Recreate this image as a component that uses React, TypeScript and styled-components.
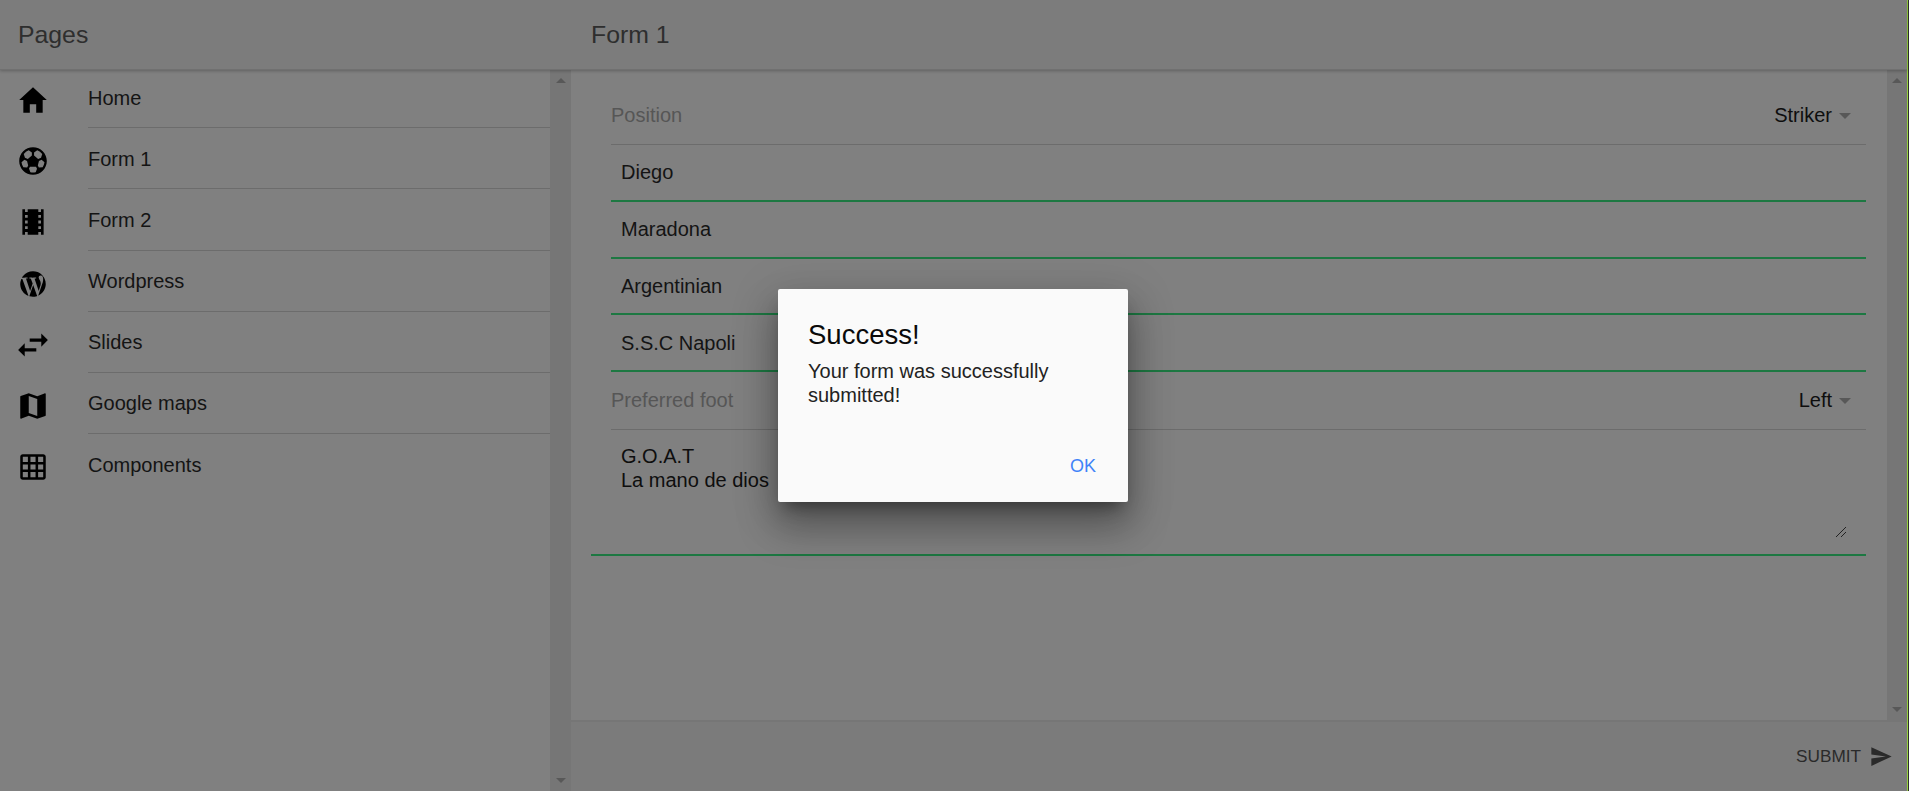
import React from 'react';
import styled, { createGlobalStyle } from 'styled-components';
import { IoMdHome, IoMdFootball, IoMdFilm, IoLogoWordpress, IoMdSwap, IoMdMap, IoMdGrid, IoMdSend } from 'react-icons/io';

const Global = createGlobalStyle`
  html, body { margin: 0; height: 100%; overflow: hidden; }
  #root { height: 100%; }
  * { box-sizing: border-box; }
  body { font-family: "Liberation Sans", Arial, sans-serif; background: #808080; }
`;

const Page = styled.div`
  position: relative;
  height: 791px;
  width: 1909px;
  background: #808080;
  border-right: 1px solid #2e2e2e;
`;
const Column = styled.div`
  height: 100%;
  display: flex;
  flex-direction: column;
  border-right: 1px solid #96d03f;
`;
const Header = styled.header`
  height: 70px;
  flex: none;
  display: flex;
  align-items: center;
  background: #7c7c7c;
  border-bottom: 1px solid #707070;
  box-shadow: 0 1px 3px rgba(0,0,0,0.25);
  position: relative;
  z-index: 1;
  color: #2e2e2e;
  font-size: 24.8px;
`;
const HeaderLeft = styled.div`
  width: 571px;
  padding-left: 18px;
`;
const HeaderRight = styled.div`
  padding-left: 20px;
`;
const Body = styled.div`
  flex: 1;
  display: flex;
  min-height: 0;
`;
const Sidebar = styled.aside`
  width: 571px;
  flex: none;
  display: flex;
`;
const NavList = styled.nav`
  flex: 1;
  margin-top: -3px;
`;
const NavRow = styled.div`
  height: 61.2px;
  display: flex;
`;
const NavIcon = styled.div`
  width: 88px;
  flex: none;
  padding-left: 16px;
  padding-top: 16px;
  font-size: 34px;
  line-height: 0;
  color: #000;
`;
const NavText = styled.div`
  flex: 1;
  font-size: 20px;
  color: #141414;
  padding-top: 19.5px;
  border-bottom: 1px solid #6c6c6c;
`;
const NavTextLast = styled(NavText)`
  border-bottom: none;
`;
const Scrollbar = styled.div`
  width: 21px;
  flex: none;
  display: flex;
  flex-direction: column;
  justify-content: space-between;
  align-items: center;
  padding: 8px 0;
  background: #767676;
`;
const MainScrollbar = styled(Scrollbar)`
  width: 20px;
`;
const ArrowUp = styled.div`
  width: 0;
  height: 0;
  border-left: 5px solid transparent;
  border-right: 5px solid transparent;
  border-bottom: 5px solid #585858;
`;
const ArrowDown = styled.div`
  width: 0;
  height: 0;
  border-left: 5px solid transparent;
  border-right: 5px solid transparent;
  border-top: 5px solid #585858;
`;
const Main = styled.main`
  flex: 1;
  display: flex;
  flex-direction: column;
  min-width: 0;
`;
const Content = styled.div`
  flex: 1;
  display: flex;
  min-height: 0;
`;
const Form = styled.div`
  flex: 1;
  padding: 0 21px 0 40px;
`;
const PickerRow = styled.div`
  height: 58px;
  display: flex;
  align-items: center;
  justify-content: space-between;
  padding: 0 15px 0 0;
  border-bottom: 1px solid #6c6c6c;
  font-size: 20px;
  color: #0e0e0e;
`;
const FirstPicker = styled(PickerRow)`
  margin-top: 15px;
  height: 60px;
  padding-top: 2px;
`;
const PickerLabel = styled.span`
  color: #565656;
`;
const PickerValue = styled.span`
  display: flex;
  align-items: center;
  gap: 7px;
`;
const Caret = styled.span`
  width: 0;
  height: 0;
  border-left: 6.5px solid transparent;
  border-right: 6.5px solid transparent;
  border-top: 6.5px solid #585858;
`;
const Field = styled.div`
  height: 56.75px;
  padding: 1px 10px 0;
  display: flex;
  align-items: center;
  font-size: 20px;
  color: #141414;
  border-bottom: 2px solid #1d7842;
`;
const Area = styled.div`
  position: relative;
  margin: 0 0 0 -20px;
  height: 126px;
  padding: 14px 0 0 30px;
  font-size: 20px;
  line-height: 24px;
  color: #0e0e0e;
  border-bottom: 2px solid #1d7842;
`;
const Grip = styled.svg`
  position: absolute;
  right: 19px;
  bottom: 16px;
`;
const Footer = styled.div`
  height: 71px;
  flex: none;
  display: flex;
  align-items: center;
  justify-content: flex-end;
  gap: 8px;
  padding-right: 13px;
  background: #7b7b7b;
  border-top: 2px solid #767676;
  font-size: 17.2px;
  color: #2a2a2a;
`;
const Overlay = styled.div`
  position: absolute;
  inset: 0;
  z-index: 5;
  display: flex;
  align-items: flex-start;
  justify-content: center;
  padding-top: 289px;
`;
const Dialog = styled.div`
  width: 350px;
  height: 213px;
  margin-right: 2px;
  background: #fafafa;
  border-radius: 2px;
  padding: 31px 30px 0;
  display: flex;
  flex-direction: column;
  box-shadow: 0 11px 15px -7px rgba(0,0,0,.4), 0 24px 38px 3px rgba(0,0,0,.28), 0 9px 46px 8px rgba(0,0,0,.1);
`;
const Title = styled.div`
  font-size: 27.5px;
  line-height: 30px;
  color: #0a0a0a;
`;
const Message = styled.div`
  margin-top: 9px;
  font-size: 20px;
  line-height: 24px;
  color: #222;
`;
const Actions = styled.div`
  margin-top: auto;
  padding-bottom: 25px;
  display: flex;
  justify-content: flex-end;
`;
const OkButton = styled.span`
  font-size: 18px;
  color: #3f83f8;
  margin-right: 2px;
`;

const items: [React.ComponentType, string][] = [
  [IoMdHome, 'Home'], [IoMdFootball, 'Form 1'], [IoMdFilm, 'Form 2'],
  [IoLogoWordpress, 'Wordpress'], [IoMdSwap, 'Slides'], [IoMdMap, 'Google maps'],
];

export default function App() {
  return (
    <Page>
      <Global />
      <Column>
        <Header>
          <HeaderLeft>Pages</HeaderLeft>
          <HeaderRight>Form 1</HeaderRight>
        </Header>
        <Body>
          <Sidebar>
            <NavList>
              {items.map(([I, t]) => (
                <NavRow key={t}><NavIcon><I /></NavIcon><NavText>{t}</NavText></NavRow>
              ))}
              <NavRow><NavIcon><IoMdGrid /></NavIcon><NavTextLast>Components</NavTextLast></NavRow>
            </NavList>
            <Scrollbar><ArrowUp /><ArrowDown /></Scrollbar>
          </Sidebar>
          <Main>
            <Content>
              <Form>
                <FirstPicker>
                  <PickerLabel>Position</PickerLabel>
                  <PickerValue>Striker<Caret /></PickerValue>
                </FirstPicker>
                <Field>Diego</Field>
                <Field>Maradona</Field>
                <Field>Argentinian</Field>
                <Field>S.S.C Napoli</Field>
                <PickerRow>
                  <PickerLabel>Preferred foot</PickerLabel>
                  <PickerValue>Left<Caret /></PickerValue>
                </PickerRow>
                <Area>
                  G.O.A.T<br />La mano de dios
                  <Grip width="12" height="12" viewBox="0 0 12 12"><path d="M1 11L11 1M6 11L11 6" stroke="#222" strokeWidth="1" /></Grip>
                </Area>
              </Form>
              <MainScrollbar><ArrowUp /><ArrowDown /></MainScrollbar>
            </Content>
            <Footer>SUBMIT<IoMdSend size={25} /></Footer>
          </Main>
        </Body>
      </Column>
      <Overlay>
        <Dialog>
          <Title>Success!</Title>
          <Message>Your form was successfully submitted!</Message>
          <Actions><OkButton>OK</OkButton></Actions>
        </Dialog>
      </Overlay>
    </Page>
  );
}
